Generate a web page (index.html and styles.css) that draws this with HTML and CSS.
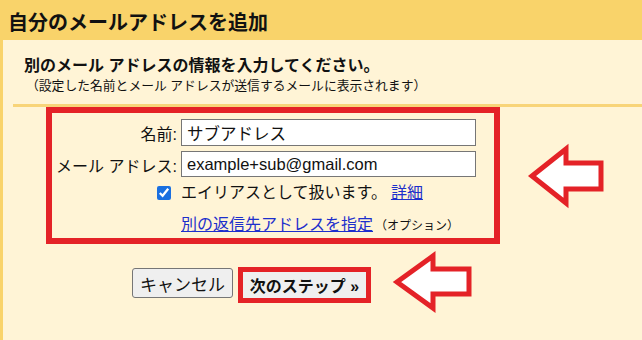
FILE: index.html
```html
<!DOCTYPE html>
<html lang="ja">
<head>
    <meta charset="UTF-8">
    <meta name="viewport" content="width=device-width, initial-scale=1.0">
    <title>自分のメールアドレスを追加</title>
    <link rel="stylesheet" href="styles.css">
</head>
<body>
    <div class="dialog-title">自分のメールアドレスを追加</div>

    <div class="dialog-body">
        <div class="intro">
            <div class="intro-head">別のメール アドレスの情報を入力してください。</div>
            <div class="intro-note">（設定した名前とメール アドレスが送信するメールに表示されます）</div>
        </div>
        <div class="separator"></div>

        <form class="mark-box" id="alias-form">
            <div class="form-grid">
                <label class="field-label" for="name">名前:</label>
                <input class="field-input" type="text" id="name" value="サブアドレス">

                <label class="field-label" for="email">メール アドレス:</label>
                <input class="field-input" type="text" id="email" value="example+sub@gmail.com">

                <div class="check-cell"><input type="checkbox" id="alias" checked></div>
                <div class="check-text"><label for="alias">エイリアスとして扱います。</label><a href="#" class="link">詳細</a></div>

                <div></div>
                <div class="reply-row"><a href="#" class="link">別の返信先アドレスを指定</a><span class="optional">（オプション）</span></div>
            </div>
        </form>

        <div class="actions">
            <button type="button" class="btn btn-cancel">キャンセル</button>
            <button type="submit" form="alias-form" class="btn btn-next">次のステップ »</button>
        </div>
    </div>

    <!-- annotation arrows drawn over the dialog -->
    <svg class="arrows" width="642" height="340" viewBox="0 0 642 340">
        <polygon points="532,176 566,149 566,163 601,163 601,189 566,189 566,203" />
        <polygon points="397,282 433,256 433,269 469,269 469,294 433,294 433,308" />
    </svg>
</body>
</html>
```

FILE: styles.css
```css
body {
    margin: 0;
    width: 642px;
    height: 340px;
    overflow: hidden;
    position: relative;
    background-color: #fff4d6;
    color: #111;
    font-family: "Liberation Sans", "Noto Sans CJK JP", sans-serif;
}

.dialog-title {
    height: 40px;
    padding: 2px 0 0 8px;
    box-sizing: border-box;
    display: flex;
    align-items: center;
    background-color: #f9d36a;
    font-size: 20px;
    font-weight: bold;
}

.dialog-body {
    border-left: 3px solid #f9d36a;
    height: 300px;
    box-sizing: border-box;
    padding-top: 16px;
}

.intro {
    padding-left: 21px;
}

.intro-head {
    font-size: 16px;
    font-weight: bold;
    line-height: 20px;
}

.intro-note {
    font-size: 12.8px;
    line-height: 19px;
    padding-left: 2px;
}

.separator {
    margin: 9px 0 0 10px;
    height: 3px;
    background-color: #f8d479;
}

.mark-box {
    margin: 0 0 0 43px;
    width: 454px;
    box-sizing: border-box;
    border: 6px solid #e42227;
    padding: 6px 0 1px 0;
}

.form-grid {
    display: grid;
    grid-template-columns: 125px 295px;
    column-gap: 4px;
    font-size: 16px;
}

.field-label {
    text-align: right;
    align-self: center;
    line-height: 20px;
    white-space: nowrap;
}

.field-input {
    height: 27px;
    box-sizing: border-box;
    margin: 0 0 5px 0;
    padding: 0 5px;
    border: 1px solid #767676;
    border-radius: 0;
    background: #fff;
    font-family: "Liberation Sans", "Noto Sans CJK JP", sans-serif;
    font-size: 16.5px;
    color: #111;
}

#email {
    height: 26px;
}

.check-cell {
    display: flex;
    justify-content: flex-end;
    align-items: center;
    height: 24px;
    margin-top: -1px;
}

.check-cell input {
    width: 14px;
    height: 14px;
    margin: 0 6px 0 0;
    accent-color: #1a6fe0;
}

.check-text {
    height: 24px;
    line-height: 24px;
    margin-top: -1px;
}

.reply-row {
    height: 24px;
    line-height: 24px;
    margin-top: 8px;
}

.link {
    color: #1d2fcc;
    text-decoration: underline;
}

.check-text .link {
    margin-left: 4px;
}

.optional {
    font-size: 12px;
    margin-left: 2px;
}

.actions {
    display: flex;
    align-items: flex-start;
    gap: 5px;
    margin: 23px 0 0 129px;
}

.btn {
    font-family: "Liberation Sans", "Noto Sans CJK JP", sans-serif;
    font-size: 16px;
    color: #111;
    background-color: #efefef;
    box-sizing: border-box;
    white-space: nowrap;
    cursor: pointer;
}

.btn-cancel {
    width: 101px;
    height: 30px;
    margin-top: 1px;
    padding: 0;
    border: 1px solid #767676;
    border-radius: 3px;
    font-size: 17px;
}

.btn-next {
    width: 133px;
    height: 36px;
    padding: 0;
    border: 5px solid #e42227;
    border-radius: 0;
    font-weight: bold;
}

.arrows {
    position: absolute;
    top: 0;
    left: 0;
    pointer-events: none;
}

.arrows polygon {
    fill: #fff;
    stroke: #e42227;
    stroke-width: 5;
    stroke-linejoin: miter;
}
```
